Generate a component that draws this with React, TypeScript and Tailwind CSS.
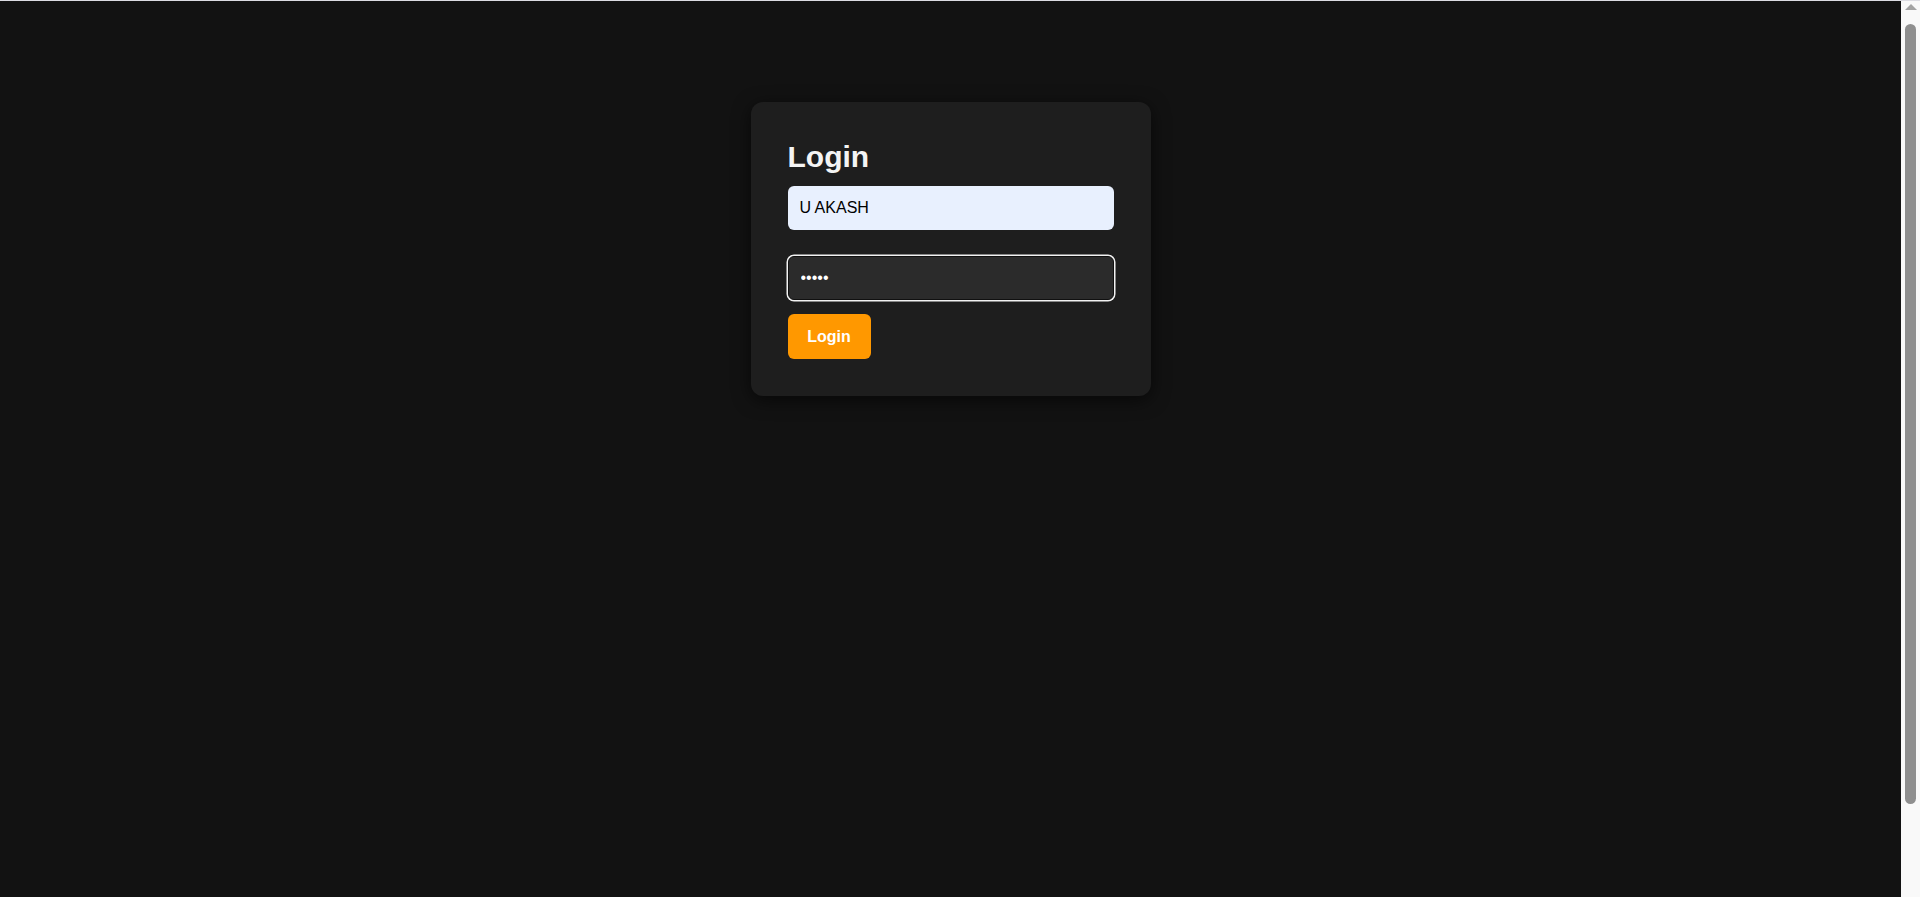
import { useState } from 'react';

export default function App() {
  const [username, setUsername] = useState('U AKASH');
  const [password, setPassword] = useState('12345');

  const handleSubmit = (e: React.FormEvent) => {
    e.preventDefault();
  };

  return (
    <div className="flex h-screen overflow-hidden border-t border-[#dcdce2] font-['Liberation_Sans',Arial,sans-serif]">
      {/* Page */}
      <main className="flex-1 bg-[#121212] pt-[101px]">
        {/* Login card */}
        <div className="mx-auto w-[400px] rounded-xl bg-[#1e1e1e] px-[37px] pt-[38px] pb-[37px] shadow-[0_4px_18px_rgba(0,0,0,0.6)]">
          <h2 className="mb-[13px] text-[30px] font-bold leading-[33px] text-[#f4f4f4]">Login</h2>
          <form onSubmit={handleSubmit} className="flex flex-col">
            <input
              type="text"
              value={username}
              onChange={(e) => setUsername(e.target.value)}
              className="h-[44px] w-full rounded-md bg-[#e8f0fe] px-3 text-[16px] text-black outline-none"
            />
            <input
              type="password"
              value={password}
              autoFocus
              onChange={(e) => setPassword(e.target.value)}
              className="mt-[26px] h-[44px] w-full rounded-md border border-[#101010] bg-[#2b2b2b] px-3 text-[16px] text-white caret-white outline-none shadow-[0_0_0_1.5px_#f2f2f2]"
            />
            <button
              type="submit"
              className="mt-[14px] h-[45px] w-[83px] rounded-md bg-[#ff9800] text-[16px] font-bold text-white"
            >
              Login
            </button>
          </form>
        </div>
      </main>

      {/* Scrollbar */}
      <div className="flex w-[19px] flex-col items-center bg-[#f9f9f9] pt-[3px]">
        <svg width="12" height="6" viewBox="0 0 12 6">
          <path d="M6 0 L12 6 L0 6 Z" fill="#a3a3a3" />
        </svg>
        <div className="mt-[14px] h-[780px] w-[11px] rounded-full bg-[#8f8f8f]" />
      </div>
    </div>
  );
}
